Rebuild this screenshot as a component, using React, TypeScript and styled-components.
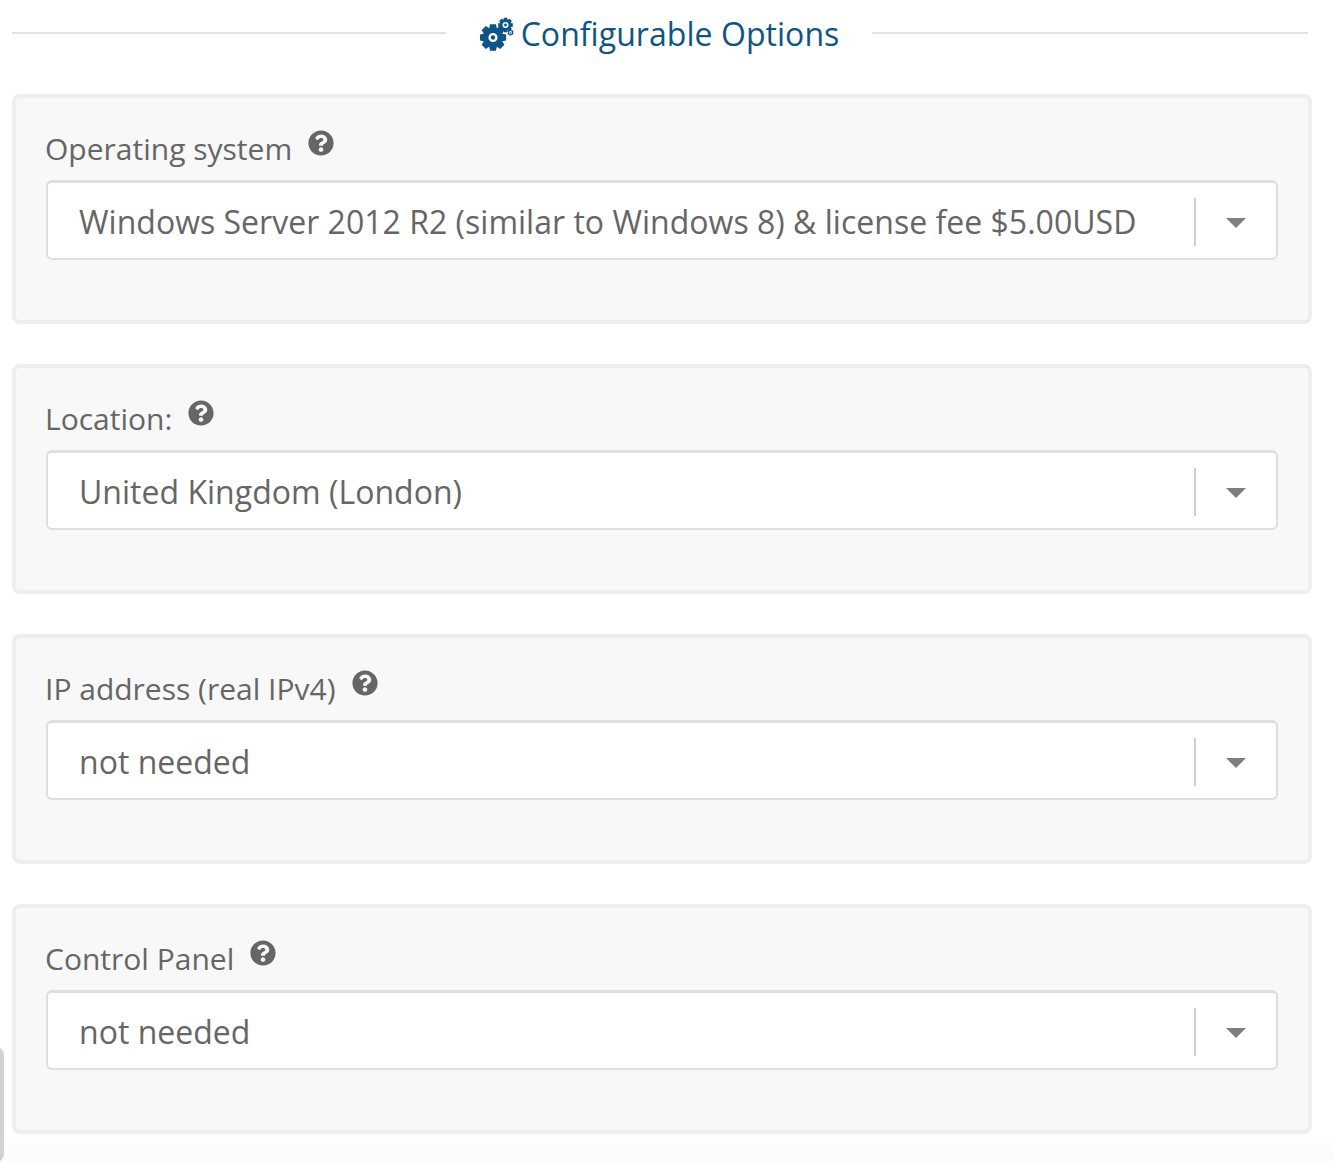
import React, { FC } from 'react';
import styled, { createGlobalStyle } from 'styled-components';
import { FaQuestionCircle } from 'react-icons/fa';

const GlobalStyle = createGlobalStyle`
    html, body {
        margin: 0;
        padding: 0;
        background: #fff;
        font-family: "Open Sans", "Liberation Sans", sans-serif;
    }
`;

const Page = styled.div`
    position: relative;
    width: 1334px;
    height: 1162px;
    overflow: hidden;
    padding: 12px 22px 0 12px;
    box-sizing: border-box;
`;

const Heading = styled.div`
    display: flex;
    align-items: center;
    height: 44px;
    margin-bottom: 38px;
`;

const Rule = styled.div<{ $width: number }>`
    width: ${(p) => p.$width}px;
    height: 2px;
    margin-top: -2px;
    background: #e2e2e2;
`;

const Title = styled.h2`
    box-sizing: border-box;
    display: flex;
    align-items: center;
    gap: 7px;
    width: 426px;
    padding-left: 1px;
    justify-content: center;
    margin: 0;
    font-size: 32px;
    font-weight: 400;
    line-height: 44px;
    letter-spacing: 0.05px;
    color: #0e5585;
`;

const Panels = styled.div`
    position: relative;
    z-index: 1;
    display: flex;
    flex-direction: column;
    gap: 40px;
`;

const Panel = styled.section`
    box-sizing: border-box;
    height: 230px;
    padding: 32px 30px 0;
    background: #f8f8f8;
    border: 4px solid #eeeeee;
    border-radius: 8px;
`;

const LabelRow = styled.div`
    display: flex;
    height: 50px;
    margin-left: -1px;
    font-size: 30px;
    line-height: 38px;
    color: #666;
`;

const Help = styled(FaQuestionCircle)`
    width: 26px;
    height: 26px;
    margin: 0 0 0 16px;
    color: #666;
`;

const Select = styled.div`
    box-sizing: border-box;
    display: flex;
    align-items: center;
    height: 80px;
    padding-left: 31px;
    background: #fff;
    border: 2px solid #dfdfdf;
    border-top-width: 3px;
    border-radius: 6px;
    font-size: 32px;
    color: #666;
`;

const Value = styled.span`
    flex: 1;
    padding-top: 2px;
    letter-spacing: 0.015px;
    white-space: nowrap;
`;

const Arrow = styled.span`
    align-self: stretch;
    display: flex;
    align-items: center;
    justify-content: center;
    width: 80px;
    margin: 15px 0 12px;
    border-left: 2px solid #cfcfcf;

    &::after {
        content: '';
        margin-top: 1px;
        border-style: solid;
        border-width: 10px 10px 0;
        border-color: #7f7f7f transparent transparent;
    }
`;

const Tab = styled.div`
    position: absolute;
    z-index: 2;
    left: -12px;
    top: 1047px;
    width: 16px;
    height: 115px;
    background: #d2d2d2;
    border-radius: 0 8px 8px 0;
`;

const Fade = styled.div`
    position: absolute;
    left: 0;
    right: 0;
    bottom: 0;
    height: 30px;
    background: linear-gradient(#fff, #fcfcfc 60%);
`;

const gear = (cx: number, cy: number, r: number, teeth: number, hole: number, dot: number) => {
    const pts: string[] = [];
    const step = (Math.PI * 2) / teeth;
    for (let i = 0; i < teeth; i++) {
        const a = i * step - Math.PI / 2;
        const corners: [number, number][] = [
            [-0.5, 0.74],
            [-0.28, 1],
            [0.28, 1],
            [0.5, 0.74],
        ];
        corners.forEach(([o, k]) => {
            const x = cx + Math.cos(a + o * step) * r * k;
            const y = cy + Math.sin(a + o * step) * r * k;
            pts.push(`${x.toFixed(2)} ${y.toFixed(2)}`);
        });
    }
    const circle = (c: number) =>
        `M${cx - c} ${cy}a${c} ${c} 0 1 0 ${c * 2} 0a${c} ${c} 0 1 0 ${-c * 2} 0z`;
    return `M${pts.join('L')}z${circle(hole)}${circle(dot)}`;
};

const CogsIcon: FC = () => (
    <svg width="34" height="34" viewBox="0 0 34 34" fill="#0e5585" aria-hidden="true">
        <path fillRule="evenodd" d={gear(13, 20.5, 13.5, 8, 4.6, 2.2)} />
        <path fillRule="evenodd" d={gear(25.5, 8, 7.5, 8, 3, 1.4)} />
        <path fillRule="evenodd" d={gear(30.5, 15.5, 3.2, 6, 1.4, 0.6)} />
    </svg>
);

const options = [
    { label: 'Operating system', value: 'Windows Server 2012 R2 (similar to Windows 8) & license fee $5.00USD' },
    { label: 'Location:', value: 'United Kingdom (London)' },
    { label: 'IP address (real IPv4)', value: 'not needed' },
    { label: 'Control Panel', value: 'not needed' },
];

const App: FC = () => (
    <Page>
        <GlobalStyle />
        <Heading>
            <Rule $width={434} />
            <Title>
                <CogsIcon />
                Configurable Options
            </Title>
            <Rule $width={436} />
        </Heading>
        <Panels>
            {options.map((o) => (
                <Panel key={o.label}>
                    <LabelRow>
                        {o.label}
                        <Help />
                    </LabelRow>
                    <Select>
                        <Value>{o.value}</Value>
                        <Arrow />
                    </Select>
                </Panel>
            ))}
        </Panels>
        <Tab />
        <Fade />
    </Page>
);

export default App;
